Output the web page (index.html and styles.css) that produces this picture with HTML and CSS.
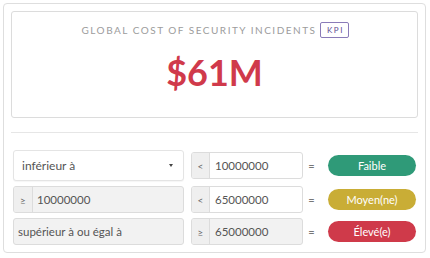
FILE: index.html
```html
<!DOCTYPE html>
<html lang="fr">
<head>
<meta charset="utf-8">
<link rel="stylesheet" href="styles.css">
</head>
<body>
<div class="page">
  <div class="card">
    <div class="kpi">
      <div class="kpi-title"><span class="kpi-label">GLOBAL COST OF SECURITY INCIDENTS</span><span class="kpi-badge">KPI</span></div>
      <div class="kpi-value">$61M</div>
    </div>
    <div class="sep"></div>
    <div class="rows">
      <div class="row row-first">
        <div class="select"><span>inférieur à</span><span class="caret"></span></div>
        <div class="group mid"><span class="addon">&lt;</span><span class="field">10000000</span></div>
        <span class="eq">=</span>
        <span class="pill green">Faible</span>
      </div>
      <div class="row">
        <div class="group left disabled"><span class="addon">≥</span><span class="field">10000000</span></div>
        <div class="group mid"><span class="addon">&lt;</span><span class="field">65000000</span></div>
        <span class="eq">=</span>
        <span class="pill yellow">Moyen(ne)</span>
      </div>
      <div class="row">
        <div class="group left disabled"><span class="field plain">supérieur à ou égal à</span></div>
        <div class="group mid disabled"><span class="addon">≥</span><span class="field">65000000</span></div>
        <span class="eq">=</span>
        <span class="pill red">Élevé(e)</span>
      </div>
    </div>
  </div>
</div>
</body>
</html>
```
FILE: styles.css
```css
* { box-sizing: border-box; }
html, body { margin: 0; padding: 0; background: #fff; }
body { font-family: Lato, "Open Sans", sans-serif; color: #555; }
.page { padding: 3px 4px 5px 3px; }
.card {
  height: 250px;
  border: 1px solid #dedede;
  border-radius: 4px;
  padding: 7px;
}
.kpi {
  height: 107px;
  border: 1px solid #dcdcdc;
  border-radius: 3px;
  padding-top: 10px;
  text-align: center;
}
.kpi-title {
  display: flex;
  justify-content: center;
  align-items: center;
  height: 16px;
  padding-left: 2px;
}
.kpi-label {
  font-size: 10px;
  letter-spacing: 1.5px;
  color: #9c9c9c;
  line-height: 16px;
}
.kpi-badge {
  margin-left: 4px;
  height: 16px;
  width: 29px;
  border: 1px solid #8a7bb8;
  border-radius: 2px;
  font-size: 8px;
  letter-spacing: 1.5px;
  color: #5f4f92;
  line-height: 14px;
  padding-left: 1px;
}
.kpi-value {
  margin-top: 12px;
  font-size: 36px;
  line-height: 44px;
  font-weight: 700;
  color: #d03a4b;
}
.sep {
  margin-top: 14px;
  height: 1px;
  background: #e6e6e6;
}
.rows {
  margin-top: 17px;
  padding-left: 2px;
  display: flex;
  flex-direction: column;
  gap: 5px;
}
.row {
  display: flex;
  align-items: center;
  height: 27px;
}
.row-first { height: 31px; }
.select {
  width: 171px;
  height: 31px;
  border: 1px solid #e4e4e4;
  border-radius: 3px;
  background: #fff;
  box-shadow: 0 1px 1px rgba(0,0,0,0.04);
  display: flex;
  align-items: center;
  justify-content: space-between;
  padding: 0 10px 0 8px;
  font-size: 12px;
  color: #555;
}
.caret {
  width: 0; height: 0;
  border-left: 2.5px solid transparent;
  border-right: 2.5px solid transparent;
  border-top: 3px solid #444;
}
.group {
  display: flex;
  height: 27px;
  border: 1px solid #dcdcdc;
  border-radius: 3px;
  background: #fff;
  font-size: 11.5px;
  color: #555;
  overflow: hidden;
}
.group.left { width: 171px; }
.group.mid { width: 112px; margin-left: 7px; }
.group.disabled { background: #f2f2f2; }
.addon {
  width: 18px;
  flex: none;
  background: #efefef;
  border-right: 1px solid #dcdcdc;
  display: flex;
  align-items: center;
  justify-content: center;
  font-size: 10px;
  color: #666;
}
.group.left .addon { width: 19px; }
.field {
  display: flex;
  align-items: center;
  padding-left: 5px;
}
.group.left .field { padding-left: 4px; }
.field.plain { padding-left: 3px; }
.eq {
  width: 25px;
  text-align: center;
  font-size: 11px;
  color: #777;
  padding-right: 8px;
}
.pill {
  width: 88px;
  height: 21px;
  border-radius: 11px;
  display: flex;
  align-items: center;
  justify-content: center;
  color: #fff;
  font-size: 11px;
}
.green { background: #2f9a78; }
.yellow { background: #c9ad36; }
.red { background: #cf3a4a; }
```
